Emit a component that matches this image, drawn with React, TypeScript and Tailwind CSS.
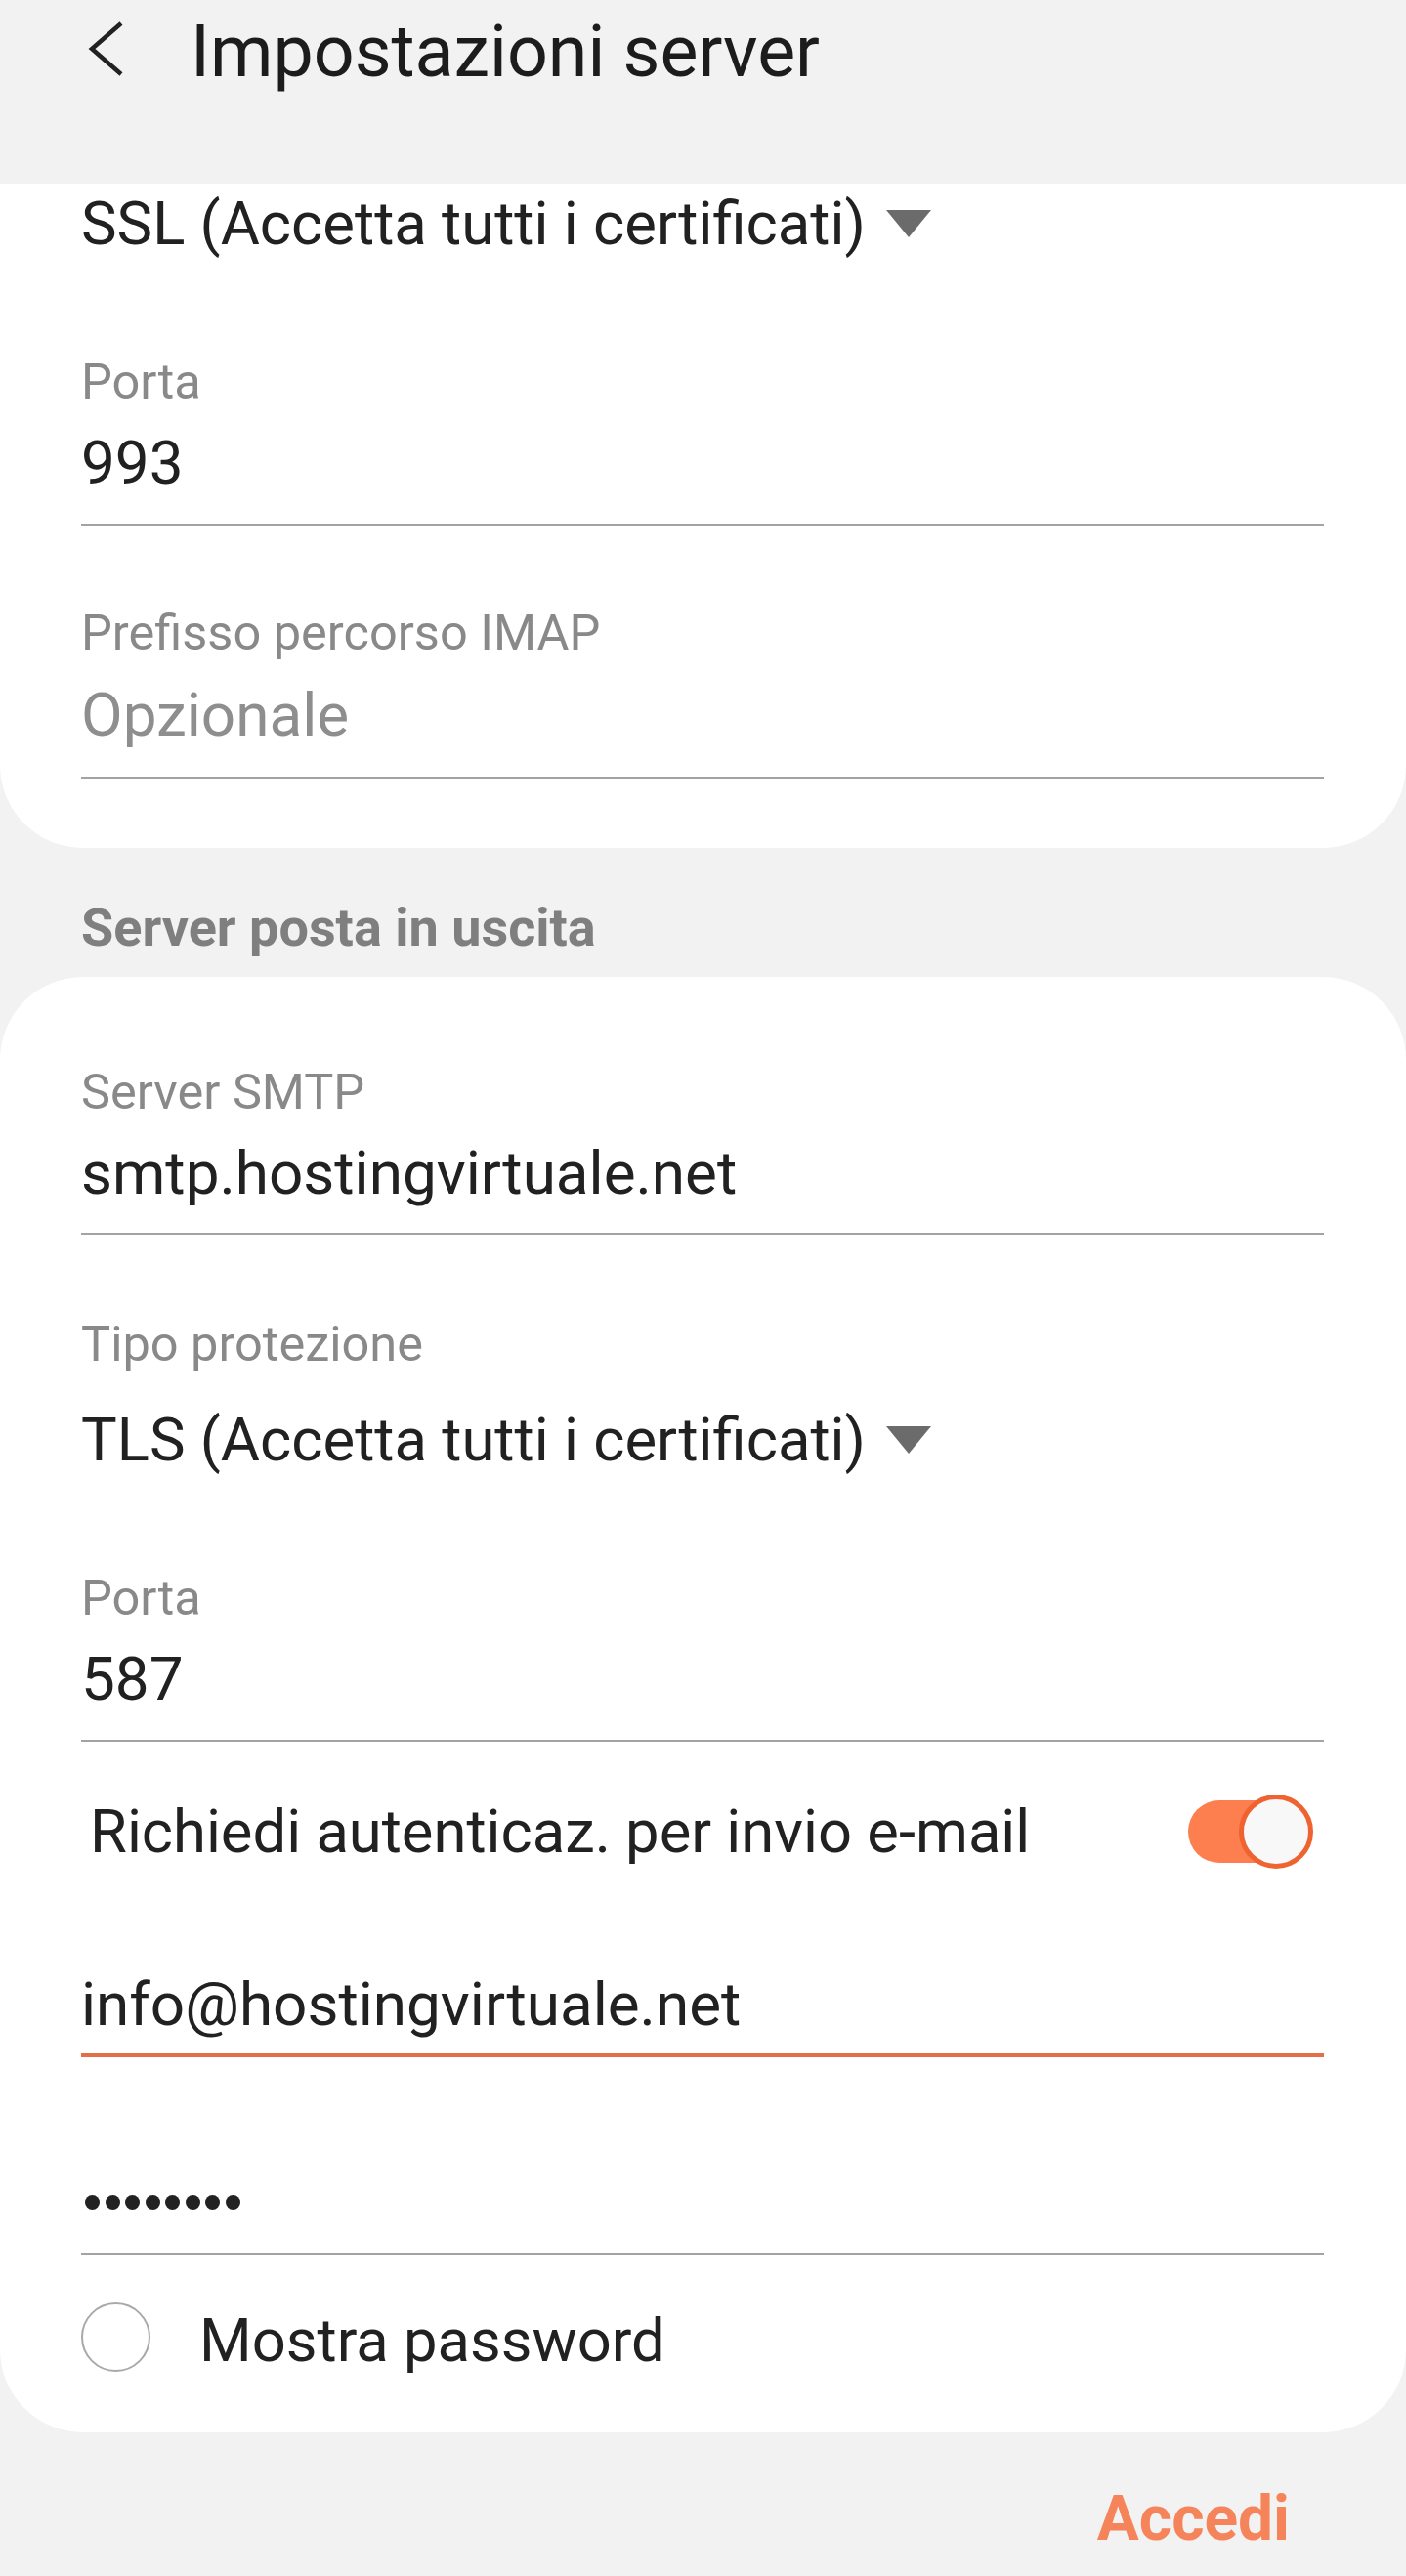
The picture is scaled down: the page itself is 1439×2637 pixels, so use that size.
import React from 'react';

// Reusable pieces of the settings form
const Label: React.FC<{ children: React.ReactNode; className?: string }> = ({ children, className = '' }) => (
  <div className={`text-[50.5px] leading-[60px] text-[#898989] ${className}`}>{children}</div>
);

const Value: React.FC<{ children: React.ReactNode; className?: string }> = ({ children, className = '' }) => (
  <div className={`text-[62px] leading-[72px] text-[#212121] ${className}`}>{children}</div>
);

const Underline: React.FC<{ className?: string }> = ({ className = '' }) => (
  <div className={`h-[2px] bg-[#a3a3a3] ${className}`} />
);

const Dropdown: React.FC<{ value: string; className?: string }> = ({ value, className = '' }) => (
  <div className={`flex items-center h-[72px] ${className}`}>
    <span className="text-[61.6px] leading-[72px] text-[#212121] whitespace-nowrap">{value}</span>
    <svg viewBox="0 0 46 28" className="w-[46px] h-[28px] ml-[21px]">
      <path d="M0 0 H46 L23 28 Z" fill="#6b6b6b" />
    </svg>
  </div>
);

const App: React.FC = () => {
  return (
    <div className="w-[1439px] min-h-[2637px] bg-[#f2f2f2] font-['Roboto','Noto_Sans',sans-serif]">
      {/* Header */}
      <div className="h-[188px] flex items-start pl-[88px]">
        <svg viewBox="0 0 40 60" className="w-[40px] h-[60px] mt-[20px]">
          <path d="M36 4 L6 30 L36 56" fill="none" stroke="#222" strokeWidth="4.5" strokeLinejoin="miter" />
        </svg>
        <h1 className="ml-[67px] mt-[9px] text-[73.5px] leading-[88px] text-[#1c1c1c] whitespace-nowrap">
          Impostazioni server
        </h1>
      </div>

      {/* Incoming server card (scrolled) */}
      <div className="bg-white rounded-b-[85px] pl-[83px] pr-[84px] pt-[5px] pb-[71px]">
        <Dropdown value="SSL (Accetta tutti i certificati)" />
        <Label className="mt-[96px]">Porta</Label>
        <Value className="mt-[17px]">993</Value>
        <Underline className="mt-[26px]" />
        <Label className="mt-[80px]">Prefisso percorso IMAP</Label>
        <Value className="mt-[18px] !text-[#8e8e8e]">Opzionale</Value>
        <Underline className="mt-[27px]" />
      </div>

      {/* Section title */}
      <div className="pt-[52px] pb-[20px] px-[83px] text-[54px] leading-[60px] font-bold text-[#7f7f7f]">
        Server posta in uscita
      </div>

      {/* Outgoing server card */}
      <div className="bg-white rounded-[85px] pl-[83px] pr-[84px] pt-[88px] pb-[58px]">
        <Label>Server SMTP</Label>
        <Value className="mt-[17px]">smtp.hostingvirtuale.net</Value>
        <Underline className="mt-[25px]" />

        <Label className="mt-[82px]">Tipo protezione</Label>
        <Dropdown value="TLS (Accetta tutti i certificati)" className="mt-[32px]" />

        <Label className="mt-[96px]">Porta</Label>
        <Value className="mt-[17px]">587</Value>
        <Underline className="mt-[26px]" />

        {/* Auth toggle */}
        <div className="mt-[47px] h-[90px] flex items-center justify-between pl-[9px] pr-[11px]">
          <span className="text-[61.5px] leading-[72px] text-[#212121]">Richiedi autenticaz. per invio e-mail</span>
          <div className="relative w-[128px] h-[76px]">
            <div className="absolute left-0 top-[6px] w-[112px] h-[64px] rounded-full bg-[#fd7f50]" />
            <div className="absolute right-0 top-0 w-[76px] h-[76px] rounded-full border-[5px] border-[#ee6330] bg-[#f8f8f8]" />
          </div>
        </div>

        <Value className="mt-[96px]">info@hostingvirtuale.net</Value>
        <div className="mt-[14px] h-[4px] bg-[#e46f47]" />

        {/* Masked password */}
        <div className="mt-[141px] h-[15px] flex items-center gap-[5.5px] pl-[4px]">
          {Array.from({ length: 8 }).map((_, i) => (
            <div key={i} className="w-[15px] h-[15px] rounded-full bg-[#222]" />
          ))}
        </div>
        <Underline className="mt-[44px]" />

        {/* Show password */}
        <div className="mt-[49px] flex items-start">
          <div className="w-[71px] h-[71px] rounded-full border-[2.5px] border-[#a9a9a9]" />
          <span className="ml-[50px] mt-[3px] text-[61.5px] leading-[72px] text-[#212121]">Mostra password</span>
        </div>
      </div>

      {/* Footer action */}
      <div className="flex justify-end pr-[119px] pt-[53px] pb-[22px]">
        <button className="text-[64px] leading-[72px] font-bold text-[#f6845a]">Accedi</button>
      </div>
    </div>
  );
};

export default App;
